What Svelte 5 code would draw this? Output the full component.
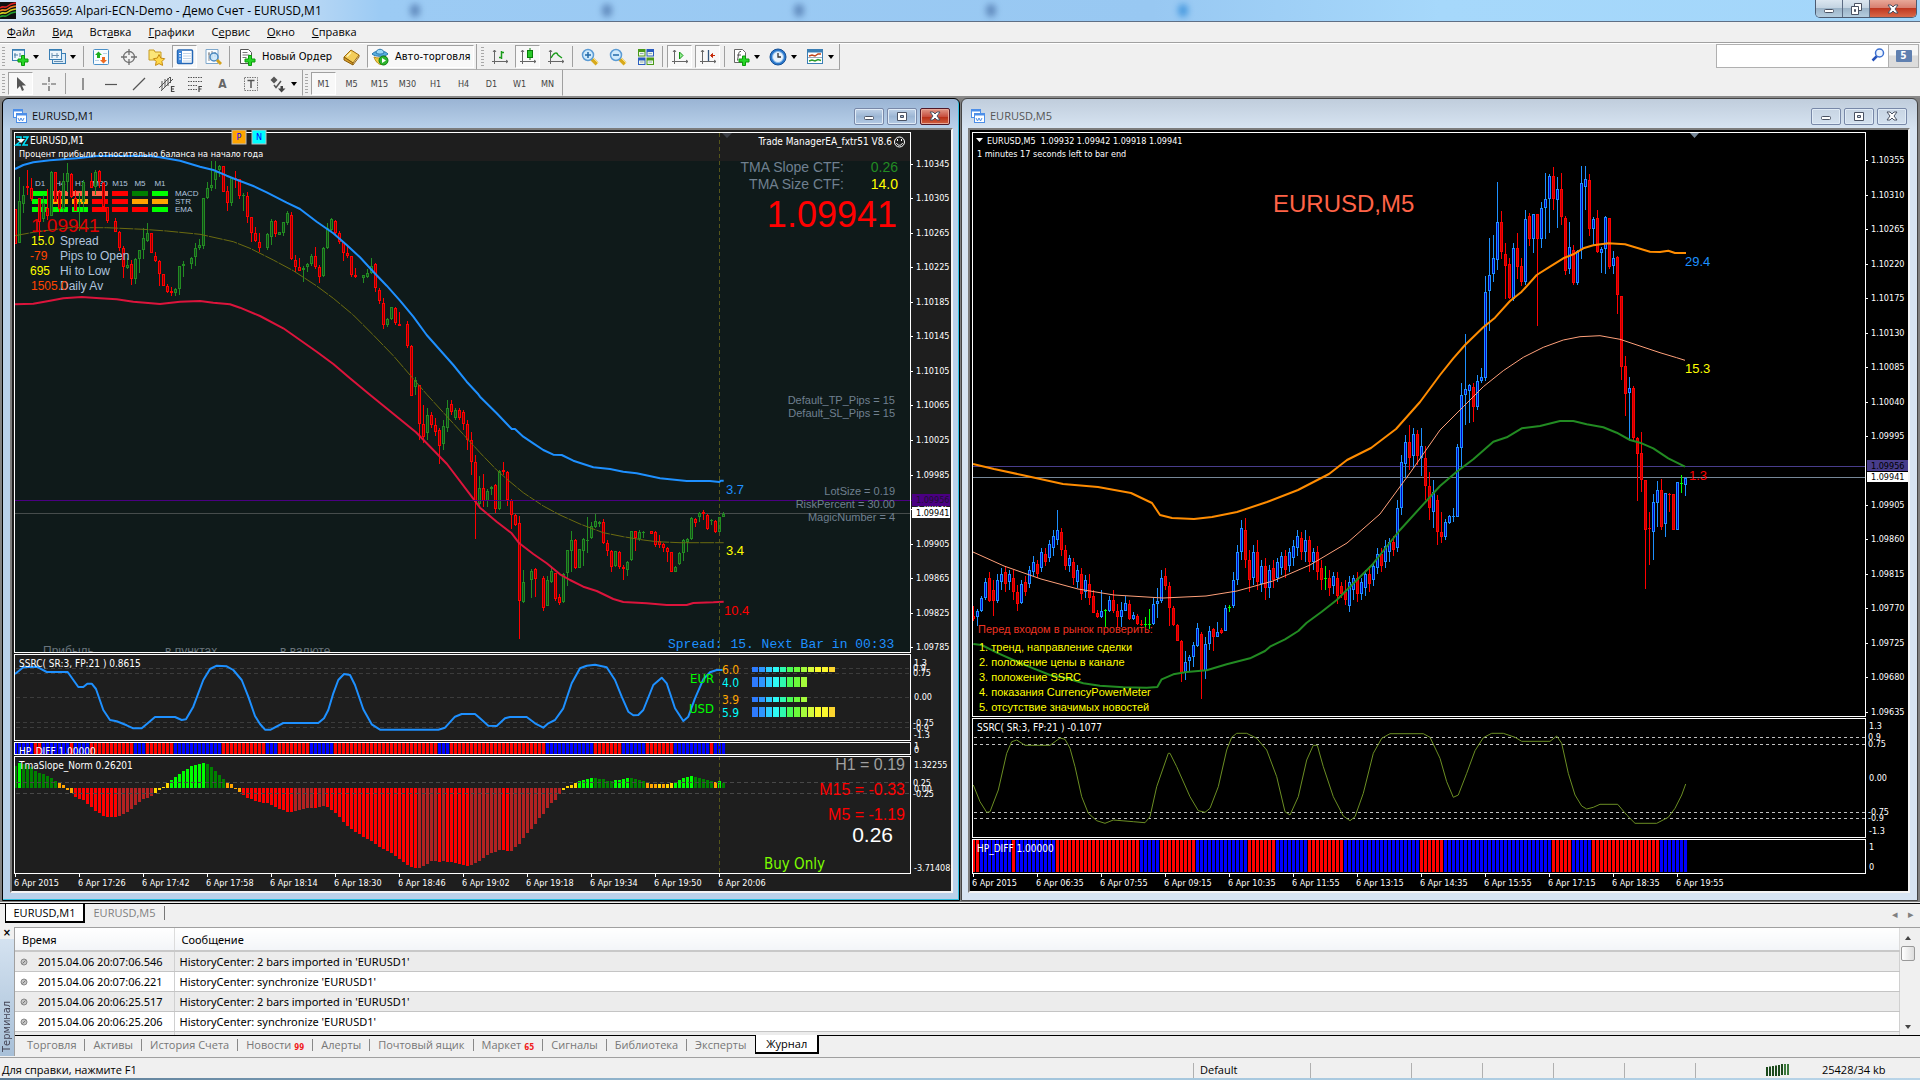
<script>
  // Candle records: colour code, high, low, body top, body bottom.
  const m1Early = 'r252 356 252 356;g157 355 228 355;g183 265 210 238;r135 210 183 190;r160 228 190 222;-;r218 335 220 290;g210 290 235 283;r192 285 248 272;g138 272 142 272;r142 232 142 232;r195 262 200 253;g143 260 168 253;g113 202 145 170;r145 220 148 216;r195 258 218 258;g205 318 230 236;g165 262 170 232;-;r145 190 168 188;g135 210 140 186;r135 190 138 170;r172 262 175 245;r245 295 245 288;-;r280 322 287 322;r318 378 322 370;r362 458 370 425;g400 432 420 430;r405 480 418 463;g400 477 403 462;g375 443 375 403;g310 402 338 374;g293 350 325 348;r325 385 325 385;r380 412 393 408;r405 483 407 448;r448 482 448 482;r478 503 482 500;r485 512 497 503;g488 512 491 503;g423 510 423 493;g408 457 418 423;-;g395 433 398 416;g353 422 368 395;g343 375 360 368;g218 372 218 363;g170 223 190 220;g108 197 180 188;g108 192 140 165;g120 155 122 136;r122 200 122 200;r182 257 197 235;g155 242 158 234;r138 190 158 165;r162 222 162 213;g205 258 211 214;r202 295 212 275;r275 350 275 325;r305 352 325 347;r325 382 350 368;-;g323 376 328 370;g282 360 288 335;r285 335 288 328;g322 330 322 330;g290 333 292 325;g258 300 263 293;r262 405 270 403;r390 440 405 427;r400 437 427 437;g422 470 430 436;g415 440 418 425;g388 424 392 418;r365 433 392 425;r420 473 427 457;g365 455 368 452;g295 372 310 370;g278 318 283 315;r285 330 287 325;r318 357 325 352;r350 408 352 385;r363 400 385 392;r393 457 393 450;r428 460 450 457;-;g450 473 450 458;g433 460 445 455;g400 448 423 445;r413 500 418 490;r490 537 495 527;r520 612 535 600;g578 605 583 600;g545 585 547 583;r545 600 548 595;r562 603 597 602;-;r587 670 598 662;r660 812 663 812'
  const m1Mid = 'g377 395 380 387;r385 440 385 424;r405 443 424 437;g408 440 415 433;r412 428 415 425;r418 436 425 432;r428 464 430 446;g420 450 426 444;g400 432 408 428;r400 415 404 412;g408 420 410 418;r408 420 410 418;r410 430 412 424;r420 450 424 440;r432 475 440 462;r455 539 462 502;g476 508 488 504'
  const m1Late = 'r252 350 295 332;g298 350 302 332;g288 315 290 296;r282 370 286 358;g240 360 243 358;r215 255 240 246;r243 347 245 331;r328 417 331 376;r372 407 376 406;r378 747 400 634;g540 638 577 635;-;g538 625 543 571;r533 620 538 566;-;r558 662 565 653;g558 648 570 647;g528 580 543 575;r548 632 550 628;r612 645 622 638;g550 638 553 637;g480 588 481 550;g423 545 451 482;r448 538 451 535;g478 535 478 535;g443 528 448 483;g380 490 449 451;g395 448 408 445;g372 413 394 412;g392 410 396 402;r388 461 397 458;r450 497 460 484;r480 545 482 532;g482 530 484 527;r482 537 487 531;r525 570 532 538;g512 557 517 541;g422 512 424 511;r422 482 424 444;g420 453 427 447;g422 443 425 428;-;r422 433 424 432;r422 470 425 464;r435 475 452 466;r460 487 463 475;r472 515 475 485;r487 545 487 545;g528 546 530 545;g487 526 490 523;g448 513 451 490;g445 485 448 455;g382 449 385 448;r385 412 388 400;g366 397 370 382;r360 390 366 373;r372 420 374 418;g386 405 390 392;r390 430 392 427;g380 427 382 425;g366 381 371 380'
  const m5Early = 'r606 621 616 619;b609 626 611 617;b596 612 598 611;b578 600 582 598;r572 602 578 601;r580 616 590 601;b574 603 580 601;b568 590 574 582;r566 592 572 584;b570 590 574 582;r570 600 578 592;r585 611 592 604;b580 604 584 603;r576 596 582 592;b566 588 570 584;b556 576 562 572;r560 578 564 574;b548 572 552 568;r548 566 554 562;b540 562 544 558;b530 556 536 548;b510 545 530 540;r528 556 532 550;r545 570 550 566;b555 572 558 566;r558 585 562 578;b565 588 570 582;r568 600 574 594;b575 598 580 592;r574 605 584 598;r590 613 596 613;r610 618 613 617;b590 618 611 617;l609 627 610 611;b596 612 600 611;r590 613 600 611;r604 627 611 617;b602 627 610 617;b596 611 603 611;r600 620 604 619;b612 620 615 619;r614 625 616 624;r620 626 624 625;l617 627 624 625;l609 629 624 625;b598 625 604 624;b588 618 601 604;b570 603 578 601;r568 590 576 586;r582 626 586 608;r606 626 608 625;r624 641 625 641;r640 682 641 673;b651 680 662 672;b655 672 657 661;b642 667 645 657;b623 647 628 646;r632 699 634 671;b637 679 644 671;b626 650 631 644;r628 651 629 637;b622 637 632 637;r628 634 630 633;b605 631 608 631;l605 612 607 608;b572 608 580 606;b545 585 552 580;b520 560 528 552;r518 568 530 560;r550 592 560 580;b545 585 552 578;r540 590 552 582;b560 592 566 584;r558 600 566 588;b565 598 570 588;r560 588 568 580;b558 582 562 578;b552 575 556 568;r550 578 556 570;b548 572 552 566;b540 566 546 558;b530 556 536 548;r532 560 538 552;b530 562 540 552;r536 572 540 562;b548 570 552 562;r546 580 552 572;r560 590 568 580;l566 590 578 579;r570 596 578 588;b572 594 576 586;r572 604 578 596;r582 598 586 594;r580 605 592 600;b576 612 582 606;b575 600 578 590;r572 602 578 594;b578 600 582 594;b570 596 574 588;r566 592 574 584;b562 586 566 580;b548 574 554 568;r548 572 554 566;b540 568 546 562;b538 562 542 552;r536 556 542 550;b500 552 508 548;b455 515 462 508;b435 478 442 464;r425 470 442 458;b428 468 434 456;r430 465 434 456;b428 476 446 458;r446 500 458 486;r472 520 486 508;b480 528 492 512;r495 545 500 532'
  const m5Late = 'r1176 1268 1237 1250;b1197 1260 1206 1250;b1186 1211 1188 1210;b1164 1206 1189 1192;b972 1190 982 1190;b788 1043 826 983;b642 915 808 826;b792 908 796 814;r790 906 802 860;b765 870 783 860;b743 788 772 782;b467 782 517 775;b353 633 466 514;b345 487 415 463;b186 450 307 421;r272 418 307 395;r370 537 403 437;r415 538 433 533;b370 543 385 538;r338 477 385 442;r415 498 439 485;b270 495 298 485;r280 378 289 356;b283 398 283 356;r283 618 283 358;b245 385 265 358;b160 358 238 265;b162 338 169 238;r141 270 169 236;b172 323 208 241;r158 315 208 292;r288 465 295 452;b305 463 382 448;r375 496 391 488;b390 495 393 488;b138 416 190 391;b138 270 178 200;r163 348 181 328;b290 378 298 328;r270 400 295 397;b382 459 388 398;b288 462 292 388;r293 446 295 440;b393 462 415 437;r408 582 412 526;r528 780 529 740;r708 888 739 821;b770 962 805 818;r798 962 805 955;r950 1143 955 1003;r936 1116 1000 1081;r1080 1407 1081 1229;r1176 1335 1225 1228;b1122 1320 1147 1235;b1083 1221 1111 1148;r1077 1230 1111 1220;b1119 1250 1120 1213;r1118 1176 1122 1126;r1123 1229 1123 1229;b1087 1229 1087 1229;l1065 1119 1089 1091;b1070 1128 1073 1094'

  // `unit` is how many record steps make one pixel.
  function candles(src, x0, y0, unit = 3) {
    return src.split(';').map((s, i) => {
      if (s === '-') return null
      const [h, l, t, b] = s.slice(1).split(' ').map((v) => Math.round(y0 + v / unit))
      return { x: x0 + 4 * i, k: s[0], h, l: Math.max(l, h + 1), t, b: Math.max(b, t + 1) }
    }).filter(Boolean)
  }
  const m1 = [...candles(m1Early, 15, 125), ...candles(m1Mid, 415, 0, 1), ...candles(m1Late, 483, 390)]
  const m5 = [...candles(m5Early, 973, 0, 1), ...candles(m5Late, 1441, 120)]
  const innerM1 = { r: '#8c0000', g: '#14481a' }
  const innerM5 = { r: '#c00000', b: '#0000cd', l: '#00ff00' }

  // Points in thirds of a pixel, offset by an origin.
  const line = (src, x0, y0) =>
    src.split(' ').map((p) => {
      const [x, y] = p.split(',').map(Number)
      return `${(x0 + x / 3).toFixed(1)},${(y0 + y / 3).toFixed(1)}`
    }).join(' ')

  const upper1 = line('45,132 70,120 100,112 150,106 230,100 290,93 450,93 480,97 540,107 600,125 640,135 680,152 720,168 760,183 800,202 860,233 900,252 950,290 1000,325 1040,360 1080,397 1120,440 1160,482 1200,527 1240,575 1280,630 1320,675 1360,720 1400,770 1435,808', 0, 125) + ' ' +
    line('0,20 50,70 95,117 105,117 130,140 160,160 190,180 220,194 245,195 280,212 340,232 390,237 430,245 470,250 540,265 620,273 690,273 718,276 722,272 731,272', 480, 390)
  const lower1 = line('45,538 100,536 150,527 190,520 245,516 300,520 350,523 400,530 480,537 540,530 600,528 640,533 690,538 720,548 780,573 850,610 900,645 950,680 1000,717 1050,760 1108,808 1248,922 1341,1017', 0, 125) + ' ' +
    line('0,353 50,395 95,430 118,460 160,492 200,520 240,553 270,570 310,590 350,603 400,627 430,636 500,640 560,645 620,645 640,639 700,637 731,635', 480, 390)
  const mid1 = line('45,332 100,322 150,315 210,308 320,308 430,313 500,318 600,328 700,350 750,370 820,405 880,437 950,483 1000,520 1060,570 1120,630 1180,692 1230,750 1280,808', 0, 125) + ' ' +
    line('0,188 50,240 80,267 130,308 190,348 240,375 300,402 370,428 430,440 490,450 530,455 600,458 731,458', 480, 390)
  const ssrc1 = line('45,132 70,112 110,110 140,126 203,126 235,171 250,171 262,161 275,161 288,177 310,240 330,270 350,274 380,286 400,295 425,295 445,278 465,261 525,261 545,270 558,268 580,230 610,150 630,117 650,107 680,109 700,120 725,150 745,200 765,258 780,282 795,299 812,299 850,279 955,279 972,265 985,240 1000,190 1015,150 1032,132 1050,135 1065,165 1090,238 1115,283 1140,299 1315,299 1335,293 1365,260 1385,252 1425,252', 0, 630) + ' ' +
    line('0,235 25,257 50,258 75,235 90,231 140,231 165,250 190,263 205,250 225,240 250,205 275,130 300,85 320,77 345,74 380,82 405,120 425,170 445,215 460,226 475,225 490,210 520,135 545,113 560,130 585,205 610,243 625,230 645,175 670,118 690,97 710,90 731,90', 480, 640)

  const upper5 = '973,464 994,469 1022,475 1063,484 1098,487 1131,493 1152,503 1160,515 1172,518 1194,519 1212,517 1237,512 1267,502 1298,490 1329,474 1347,460 1371,448 1396,429 1420,402 ' +
    line('0,765 40,715 75,675 130,622 165,593 210,543 245,515 290,465 330,440 370,415 400,403 430,385 460,376 505,370 555,373 590,383 630,395 660,396 685,392 705,399 738,399', 1440, 120)
  const mid5 = '973,552 1004,566 1041,579 1078,589 1114,595 1163,598 1206,596 1237,591 1273,581 1310,565 1347,543 1380,514 1410,473 ' +
    line('0,930 70,860 130,800 190,752 250,712 310,682 370,660 420,650 480,647 540,658 600,678 660,698 710,713 735,721', 1440, 120)
  const lower5 = line('40,132 65,135 110,158 160,180 220,205 270,225 320,235 370,250 420,257 490,262 560,263 592,261 605,238 640,223 680,216 740,211 800,193 870,175 915,153 930,140 975,118 1015,93 1040,68 1085,35 1130,0', 960, 600) + ' 1372,565 1400,530 ' +
    line('0,1098 50,1055 100,1018 160,965 200,952 245,925 300,918 360,903 400,903 440,913 490,922 530,938 570,960 605,970 640,985 685,1015 735,1040', 1440, 120)
  const ssrc5 = line('40,555 60,605 80,637 90,635 115,570 140,460 155,425 170,420 195,436 270,436 300,414 315,418 330,445 345,500 365,590 385,640 410,662 435,670 460,660 520,665 555,668 570,650 590,560 625,460 630,460 650,500 690,590 715,632 735,637 750,625 775,560 800,450 815,412 830,400 860,400 890,415 920,450 950,530 975,635 990,645 1015,590 1040,480 1060,436 1072,436 1090,500 1120,590 1150,648 1170,662 1185,650 1210,580 1240,460 1265,415 1290,401 1390,401 1410,412', 960, 600) + ' ' +
    line('0,835 20,905 40,952 55,945 80,880 105,812 130,773 155,760 190,760 225,772 245,784 330,784 350,768 365,790 385,880 405,945 425,978 440,987 460,982 480,973 533,973 560,1005 585,1030 650,1030 685,1012 705,985 725,945 737,912', 1440, 480)

  // Run lengths of alternating colours.
  const runs = (list, first) =>
    list.flatMap((n, i) => Array(n).fill((i % 2 === 0) === (first === 'b') ? '#0000ff' : '#ff0000'))
  const diff1 = runs([5, 2, 7, 1, 4, 11, 3, 7, 12, 11, 3, 8, 6, 26, 3, 24, 12, 7, 6, 7, 9, 1, 3], 'b')
  const diff5 = runs([2, 8, 1, 10, 21, 5, 9, 13, 7, 8, 9, 19, 6, 27, 5, 5, 17, 7], 'r')

  const slopeColors = { d: '#008000', l: '#00ff00', o: '#ffa500', y: '#ffd700', r: '#ff0000', k: '#b22222' }
  const slope = 'd408 l400 d402 d405 d410 d422 d428 d432 d438 d444 d452 o458 o465 o480 o490 r500 r506 r510 r521 r531 r543 r549 r557 r560 r561 r561 k557 k551 k546 k537 k525 k516 k507 k503 k497 y489 y480 y471 y458 l450 l441 l432 l423 l417 l409 l405 l402 l399 d402 d411 d423 d434 d447 o459 o462 o477 o487 r495 r503 r507 r513 r516 r519 r519 r525 r531 r537 r540 r545 r545 k543 k541 k538 k535 k534 r534 k531 k528 r531 r540 r549 r561 r576 r588 r597 r606 r612 r620 r627 r634 r641 r650 r656 r663 r669 r678 r687 r696 r705 r711 r714 k714 k708 k702 k693 k693 r695 k693 r696 r696 r699 r702 r705 r708 k705 k699 k693 k685 k675 k668 k665 k659 r660 r663 k663 k650 k642 k624 k609 k597 k582 k564 k552 k534 k520 k510 k492 y480 y468 y465 y459 l453 l450 l447 l444 d444 d447 d447 d453 d453 l450 l450 l447 l444 d444 d447 d450 d453 o460 o462 o462 y462 o462 y462 y459 l456 l450 l444 l441 l438 d441 d444 d447 d450 d453 o457 l454 d458'
    .split(' ').map((s, i) => {
      const tip = Math.round((+s.slice(1) - 474) / 3)
      return { x: 14 + 4 * i, y: tip < 0 ? 788 + tip : 788, h: Math.abs(tip), c: slopeColors[s[0]] }
    })

  const prices1 = [['1.10345', 164], ['1.10305', 198], ['1.10265', 233], ['1.10225', 267], ['1.10185', 302], ['1.10145', 336], ['1.10105', 371], ['1.10065', 405], ['1.10025', 440], ['1.09985', 475], ['1.09945', 509], ['1.09905', 544], ['1.09865', 578], ['1.09825', 613], ['1.09785', 647]]
  const prices5 = [['1.10355', 160], ['1.10310', 195], ['1.10265', 229], ['1.10220', 264], ['1.10175', 298], ['1.10130', 333], ['1.10085', 367], ['1.10040', 402], ['1.09995', 436], ['1.09905', 505], ['1.09860', 539], ['1.09815', 574], ['1.09770', 608], ['1.09725', 643], ['1.09680', 677], ['1.09635', 712]]
  const times1 = ['2015', '17:26', '17:42', '17:58', '18:14', '18:30', '18:46', '19:02', '19:18', '19:34', '19:50', '20:06']
  const times5 = ['2015', '06:35', '07:55', '09:15', '10:35', '11:55', '13:15', '14:35', '15:55', '17:15', '18:35', '19:55']

  const frames = ['D1', 'H4', 'H1', 'M30', 'M15', 'M5', 'M1']
  const L = '#00ff00', T = '#ff6347', R = '#ff0000', G = '#008000', O = '#ffa500'
  const signals = [
    { name: 'MACD', cells: [L, T, T, T, R, G, L] },
    { name: 'STR', cells: [L, O, O, R, R, O, O] },
    { name: 'EMA', cells: [L, L, L, R, R, R, L] }
  ]
  const meter = ['#2e7bff', '#2e96ff', '#2ed0ff', '#2efbf5', '#2efbaf', '#49fb55', '#6cfb3b', '#a5fb3b', '#d5fb3b', '#fbfb2e', '#fbf82e', '#fbd52e']
  const meters = [{ y: 667, h: 5, n: 12 }, { y: 677, h: 10, n: 8 }, { y: 697, h: 5, n: 8 }, { y: 707, h: 10, n: 12 }]

  const menu = [['', 'Ф', 'айл'], ['', 'В', 'ид'], ['Вст', 'а', 'вка'], ['', 'Г', 'рафики'], ['С', 'е', 'рвис'], ['', 'О', 'кно'], ['', 'С', 'правка']]
  const periods = ['M1', 'M5', 'M15', 'M30', 'H1', 'H4', 'D1', 'W1', 'MN']
  const log = [
    ['2015.04.06 20:07:06.546', "HistoryCenter: 2 bars imported in 'EURUSD1'"],
    ['2015.04.06 20:07:06.221', "HistoryCenter: synchronize 'EURUSD1'"],
    ['2015.04.06 20:06:25.517', "HistoryCenter: 2 bars imported in 'EURUSD1'"],
    ['2015.04.06 20:06:25.206', "HistoryCenter: synchronize 'EURUSD1'"]
  ]
  const tabs = [['Торговля'], ['Активы'], ['История Счета'], ['Новости', '99'], ['Алерты'], ['Почтовый ящик'], ['Маркет', '65'], ['Сигналы'], ['Библиотека'], ['Эксперты'], ['Журнал']]
</script>

{#snippet icon(name)}
  <svg class="ico" viewBox="0 0 18 18" width="18" height="18" aria-hidden="true">
    {#if name === 'newchart'}
      <rect x="1.5" y="1.5" width="12" height="11" fill="#eef6fc" stroke="#3a7fb5" /><path d="M1 2h13" stroke="#3a7fb5" stroke-width="1.500" /><path d="M4 5v5M3 7h4M9 5v4" stroke="#4b7fa5" />
      <path d="M10.500 7.500h3v3.500h3.500v3h-3.500v3.500h-3v-3.500h-3.500v-3h3.500z" fill="#27d627" stroke="#0a9a0a" />
    {:else if name === 'profiles'}
      <rect x="4.500" y="5.500" width="13" height="10" fill="#dcecf8" stroke="#3a7fb5" /><rect x="1.500" y="1.500" width="12" height="10" fill="#eef6fc" stroke="#3a7fb5" /><path d="M1 2h13" stroke="#3a7fb5" stroke-width="1.500" /><path d="M4 5v5M4 7.500h7M9 5v5M6 13.500h9" stroke="#6a8fae" />
    {:else if name === 'market'}
      <rect x="1.500" y="1.500" width="15" height="15" rx="1" fill="#f8fcff" stroke="#4a90c8" /><path d="M6.500 3.500l3.500 3.500H8v3H5V7H3z" fill="#1fae1f" /><path d="M11.500 15.500L8 12h2V9h3v3h2z" fill="#ee6a20" /><path d="M11 5.500h4M3 12.500h4" stroke="#b8d0e4" />
    {:else if name === 'target'}
      <circle cx="9" cy="9" r="5.500" fill="none" stroke="#707070" stroke-width="1.300" /><path d="M9 1v6M9 11v6M1 9h6M11 9h6" stroke="#707070" stroke-width="1.300" />
    {:else if name === 'folder'}
      <path d="M1 2h5l1 2h6v8H1z" fill="#fbe678" stroke="#c79b22" /><path d="M11 6.500l1.800 3.600 3.900.6-2.800 2.800.7 3.900-3.600-1.800-3.500 1.800.7-3.900-2.800-2.800 3.900-.6z" fill="#ffd94a" stroke="#c58a10" />
    {:else if name === 'navigator'}
      <rect x="1.500" y="2" width="15" height="13.500" rx="1" fill="#fff" stroke="#2567b5" stroke-width="1.500" /><rect x="2" y="3" width="4" height="12" fill="#3f86d8" /><path d="M7 5.500h8M7 8h8M7 10.500h8M7 13h8" stroke="#c3d5e8" /><path d="M3 5.500h2M3 8h2M3 11h2" stroke="#fff" />
    {:else if name === 'tester'}
      <path d="M2 1.500h12v14H2z" fill="#fbfdff" stroke="#7fa8cc" /><path d="M5 4v9M11 4v5M4 6h2M8 3v8" stroke="#888" /><circle cx="10" cy="9" r="4" fill="#cbe7fb" fill-opacity=".85" stroke="#4d8ac0" stroke-width="1.500" /><path d="M13 12l4 4" stroke="#d3a11c" stroke-width="3" />
    {:else if name === 'order'}
      <path d="M2.500 1.500h8l3 3v11h-11z" fill="#fff" stroke="#555" /><path d="M4.500 4.500h5M4.500 7h7M4.500 9.500h4" stroke="#777" /><path d="M10.500 7.500h3v3.500h3.500v3h-3.500v3.500h-3v-3.500H7v-3h3.500z" fill="#27d627" stroke="#0a9a0a" />
    {:else if name === 'book'}
      <path d="M1 9l7-7 8 5-6 8z" fill="#f3cd5a" stroke="#9d6a0c" /><path d="M1 9v3l9 5v-2z" fill="#d9a02a" stroke="#8a5b08" /><path d="M10 17l6-8V7" fill="none" stroke="#9d6a0c" /><path d="M4 8.500l4-4" stroke="#fff3b8" stroke-width="1.500" />
    {:else if name === 'expert'}
      <path d="M1 6c3-4 13-4 16 0-3 3-13 3-16 0z" fill="#56aee0" stroke="#2a77ac" /><path d="M5 5c0-5 8-5 8 0-2 1.500-6 1.500-8 0z" fill="#9bd8f6" stroke="#2a77ac" /><path d="M3 9c3 1.500 9 1.500 12-.5l-5 8c-3 0-6-4-7-7.500z" fill="#f1cd48" stroke="#b98b15" /><circle cx="12.500" cy="12.500" r="4.500" fill="#2eb52e" stroke="#0d7d0d" /><path d="M11 10l4 2.500-4 2.500z" fill="#fff" />
    {:else if name === 'bars'}
      <path d="M3.500 2v14M1 13.500h16M2 4l1.500-2L5 4M15 12l2 1.500-2 1.500" fill="none" stroke="#666" /><path d="M10.500 3v8M8 9.500h2.500M10.500 4.500H13" stroke="#1a9b1a" stroke-width="1.500" />
    {:else if name === 'candlesticks'}
      <path d="M3.500 2v14M1 13.500h16M2 4l1.500-2L5 4M15 12l2 1.500-2 1.500" fill="none" stroke="#666" /><path d="M11 0v12" stroke="#087d08" /><rect x="8.500" y="2.500" width="5" height="7" fill="#28c828" stroke="#087d08" />
    {:else if name === 'linechart'}
      <path d="M3.500 2v14M1 13.500h16M2 4l1.500-2L5 4M15 12l2 1.500-2 1.500" fill="none" stroke="#666" /><path d="M4 10c3-6 6-6 7-3l4 3" fill="none" stroke="#1a9b1a" stroke-width="1.300" />
    {:else if name === 'zoomin' || name === 'zoomout'}
      <path d="M11 11l5 5" stroke="#d8a91c" stroke-width="4" /><path d="M12 10l5 5" stroke="#fbe27a" /><circle cx="7" cy="7" r="5.500" fill="#cfeafc" stroke="#5b9bd4" stroke-width="1.500" /><path d="M4 7h6" stroke="#2268a8" stroke-width="1.500" />
      {#if name === 'zoomin'}<path d="M7 4v6" stroke="#2268a8" stroke-width="1.500" />{/if}
    {:else if name === 'tile'}
      <rect x="1" y="1" width="7.500" height="7.500" fill="#4a9a1a" /><rect x="9.500" y="1" width="7.500" height="7.500" fill="#2a5cc0" /><rect x="1" y="9.500" width="7.500" height="7.500" fill="#2a5cc0" /><rect x="9.500" y="9.500" width="7.500" height="7.500" fill="#4a9a1a" /><path d="M2 4h5.500v3.500H2zM10.500 4H16v3.500h-5.500zM2 12.500h5.500V16H2zM10.500 12.500H16V16h-5.500z" fill="#eef8e8" /><path d="M3 5.500h3.500M11.500 5.500H15M3 14h3.500M11.500 14H15" stroke="#9ab" />
    {:else if name === 'scroll'}
      <path d="M3.500 2v14M1 13.500h16M2 4l1.500-2L5 4M15 12l2 1.500-2 1.500" fill="none" stroke="#666" /><path d="M8.500 4l3.500 3.500L8.500 11z" fill="#8ff08f" stroke="#159015" />
    {:else if name === 'shift'}
      <path d="M3.500 2v14M1 13.500h16M2 4l1.500-2L5 4M15 12l2 1.500-2 1.500" fill="none" stroke="#666" /><path d="M9.500 2v11" stroke="#33557a" stroke-width="1.300" /><path d="M16 7.500h-4M13.500 5.500l-2 2 2 2z" stroke="#c52b0b" fill="#c52b0b" />
    {:else if name === 'indicators'}
      <path d="M2.500 1.500h8l3 3v10h-11z" fill="#fff" stroke="#666" /><path d="M9 3.500c-2-.5-2 1-2.500 3l-1 6M5 7h4" fill="none" stroke="#555" /><path d="M10.500 8h3v3h3.500v3h-3.500v3.500h-3v-3.500H7v-3h3.500z" fill="#27d627" stroke="#0a9a0a" />
    {:else if name === 'clock'}
      <circle cx="9" cy="9" r="8" fill="#2a78cc" stroke="#154f95" /><circle cx="9" cy="9" r="5.500" fill="#e9f3fc" stroke="#8bbbe8" /><path d="M9 5v4h3" fill="none" stroke="#333" stroke-width="1.300" />
    {:else if name === 'template'}
      <rect x="1.500" y="1.500" width="15" height="14" fill="#fff" stroke="#3a7fb5" /><path d="M1 3h16" stroke="#3a7fb5" stroke-width="3" /><path d="M3 8l3-1 3 1 3-2h3" fill="none" stroke="#c0441a" stroke-width="1.500" /><path d="M2 9.500h14" stroke="#9ab" /><path d="M3 13l3-1 3 1 3-1.500 3 1" fill="none" stroke="#2b9c2b" stroke-width="1.500" />
    {:else if name === 'pointer'}
      <path d="M5 2v12l3-3 2 5 2-1-2-4.500h4z" fill="#555" />
    {:else if name === 'cross'}
      <path d="M9 2v5M9 11v5M2 9h5M11 9h5" stroke="#555" stroke-width="1.200" /><path d="M9 8.500v1" stroke="#555" />
    {:else if name === 'vline'}
      <path d="M9 3v12" stroke="#555" stroke-width="1.200" />
    {:else if name === 'hline'}
      <path d="M3 9.500h12" stroke="#555" stroke-width="1.200" />
    {:else if name === 'trend'}
      <path d="M3 15L15 3" stroke="#555" stroke-width="1.200" />
    {:else if name === 'channel'}
      <path d="M1 13L12 2M3 16L15 4M4 6v9M7 4v8M10 3v8M12.500 2v6" stroke="#555" /><path d="M16.500 11.500h-3v5h3M13.500 14h2.500" fill="none" stroke="#444" stroke-width="1.200" />
    {:else if name === 'fibo'}
      <path d="M2 2.500h14M2 6.500h14M2 10.500h9M2 14.500h9" stroke="#555" stroke-dasharray="1.500 1" /><path d="M16 11.500h-3V17M13 14h2.500" fill="none" stroke="#444" stroke-width="1.200" />
    {:else if name === 'label'}
      <rect x="2.500" y="2.500" width="13" height="13" fill="none" stroke="#777" stroke-dasharray="1.500 1" /><path d="M5.500 5.500h7M9 5v8" stroke="#555" stroke-width="1.500" />
    {:else if name === 'arrows'}
      <path d="M5 1.500l3.500 3.500L5 8.500 1.500 5z" fill="#555" /><path d="M14 11v2.500h2.500L12.500 17.500l-3.500-4h2.500V11z" fill="#444" /><path d="M5 10l2 2.500L12 6" fill="none" stroke="#555" stroke-width="1.500" />
    {/if}
  </svg>
{/snippet}

{#snippet tool(name, label, pressed, drop)}
  <button class="tool" class:pressed class:drop aria-label={label}>{@render icon(name)}{#if drop}<span class="caret"></span>{/if}</button>
{/snippet}

{#snippet winIcon()}
  <svg class="wico" viewBox="0 0 14 14" width="14" height="14" aria-hidden="true"><rect x=".5" y=".5" width="9" height="8" fill="#fff" stroke="#4c8ee8" /><path d="M0 1.500h10" stroke="#4c8ee8" stroke-width="2" /><rect x="3.500" y="4.500" width="10" height="9" fill="#fff" stroke="#4c8ee8" /><path d="M3 5.500h11" stroke="#4c8ee8" stroke-width="2" /><path d="M5 9l1.500 3L8 9l1.500 3L11 9" fill="none" stroke="#4c8ee8" /></svg>
{/snippet}

{#snippet glyph(kind)}
  <svg viewBox="0 0 12 12" width="12" height="12" aria-hidden="true">
    {#if kind === 'min'}<rect x="1.500" y="6.500" width="9" height="3" rx="1" fill="#fff" stroke="#4a5263" />
    {:else if kind === 'max'}<path d="M1.500 2.500h9v8h-9zM4.500 5.500v2h3v-2z" fill="#fff" fill-rule="evenodd" stroke="#4a5263" />
    {:else if kind === 'restore'}<path d="M4.500.5h7v7h-7z" fill="#fff" stroke="#4a5263" /><path d="M1.500 3.500h7v8h-7zM4.500 6.500v2h1v-2z" fill="#fff" fill-rule="evenodd" stroke="#4a5263" />
    {:else}<path d="M1 2h3l2 2 2-2h3L8 6l3 4H8L6 8l-2 2H1l3-4z" fill="#fff" stroke="#4a5263" />{/if}
  </svg>
{/snippet}

{#snippet childTitle(name)}
  <header class="childbar">
    {@render winIcon()}<span>{name}</span>
    <div class="controls">
      <button aria-label="Свернуть">{@render glyph('min')}</button>
      <button aria-label="Развернуть">{@render glyph('max')}</button>
      <button class="close" aria-label="Закрыть">{@render glyph('close')}</button>
    </div>
  </header>
{/snippet}

{#snippet candle(c, inner)}
  <rect x={c.x} y={c.h} width="1" height={c.l - c.h} class={c.k} />
  <rect x={c.x - 1} y={c.t} width="3" height={c.b - c.t} class={c.k} />
  {#if c.b - c.t > 2}<rect x={c.x} y={c.t + 1} width="1" height={c.b - c.t - 2} fill={inner[c.k]} />{/if}
{/snippet}

<div class="app">
  <header class="titlebar">
    <svg class="logo" viewBox="0 0 16 17" width="16" height="17" aria-hidden="true"><rect width="16" height="17" fill="#101010" /><path d="M0 6c4-3 4 1 8-2s4-2 8-3" fill="none" stroke="#e02020" stroke-width="1.500" /><path d="M0 9c4-3 4 1 8-2s4-2 8-3" fill="none" stroke="#f08020" stroke-width="1.500" /><path d="M0 12c4-3 4 1 8-2s4-2 8-3" fill="none" stroke="#d8d020" stroke-width="1.500" /><path d="M0 15c4-3 4 1 8-2s4-2 8-3" fill="none" stroke="#20a030" stroke-width="1.500" /></svg>
    <h1>9635659: Alpari-ECN-Demo - Демо Счет - EURUSD,M1</h1>
    <div class="glow" aria-hidden="true"><i></i><i></i><i></i><i></i><i></i></div>
    <div class="syscontrols">
      <button aria-label="Свернуть окно">{@render glyph('min')}</button>
      <button aria-label="Восстановить окно">{@render glyph('restore')}</button>
      <button class="close" aria-label="Закрыть окно">{@render glyph('close')}</button>
    </div>
  </header>

  <nav class="menu">
    {#each menu as m}<button>{m[0]}<u>{m[1]}</u>{m[2]}</button>{/each}
  </nav>

  <div class="toolbars">
    <div class="bars">
      <div class="row">
        <div class="bar">
          <span class="grip"></span>
          {@render tool('newchart', 'Новый график', false, true)}
          {@render tool('profiles', 'Профили', false, true)}
          <span class="sep"></span>
          {@render tool('market', 'Обзор рынка')}
          {@render tool('target', 'Окно данных')}
          {@render tool('folder', 'Избранное')}
          {@render tool('navigator', 'Терминал', true)}
          {@render tool('tester', 'Тестер стратегий')}
          <span class="sep"></span>
          <button class="tool wide">{@render icon('order')}Новый Ордер</button>
          {@render tool('book', 'Редактор')}
          <button class="tool wide pressed">{@render icon('expert')}Авто-торговля</button>
        </div>
        <div class="bar charts">
          <span class="grip"></span>
          {@render tool('bars', 'Бары')}
          {@render tool('candlesticks', 'Свечи', true)}
          {@render tool('linechart', 'Линия')}
          <span class="sep"></span>
          {@render tool('zoomin', 'Увеличить')}
          {@render tool('zoomout', 'Уменьшить')}
          {@render tool('tile', 'Расположить окна')}
          <span class="sep"></span>
          {@render tool('scroll', 'Автопрокрутка', true)}
          {@render tool('shift', 'Сдвиг графика', true)}
          <span class="sep"></span>
          {@render tool('indicators', 'Индикаторы', false, true)}
          {@render tool('clock', 'Периоды', false, true)}
          {@render tool('template', 'Шаблоны', false, true)}
        </div>
      </div>
      <div class="row">
        <div class="bar">
          <span class="grip"></span>
          {@render tool('pointer', 'Курсор', true)}
          {@render tool('cross', 'Перекрестие')}
          <span class="sep"></span>
          {@render tool('vline', 'Вертикальная линия')}
          {@render tool('hline', 'Горизонтальная линия')}
          {@render tool('trend', 'Трендовая линия')}
          {@render tool('channel', 'Канал')}
          {@render tool('fibo', 'Фибоначчи')}
          <button class="tool letter">A</button>
          {@render tool('label', 'Текстовая метка')}
          {@render tool('arrows', 'Стрелки', false, true)}
        </div>
        <div class="bar">
          <span class="grip"></span>
          {#each periods as p, i}<button class="tool period" class:pressed={i === 0}>{p}</button>{/each}
        </div>
      </div>
    </div>
    <div class="search">
      <input type="text" aria-label="Поиск" />
      <svg class="lens" viewBox="0 0 14 14" width="14" height="14" aria-hidden="true"><path d="M6 8l-4.500 4.500" stroke="#2450b8" stroke-width="2.500" /><circle cx="8.500" cy="5" r="4" fill="#eef5ff" stroke="#3c70d0" stroke-width="1.500" /></svg>
      <button class="chat" aria-label="Сообщения"><b>5</b></button>
    </div>
  </div>

  <main class="mdi">
    <section class="child active">
      {@render childTitle('EURUSD,M1')}
      <div class="client">
        <svg class="chart" viewBox="12 130 939 761">
          <defs><clipPath id="p1"><rect x="15" y="133" width="895" height="519" /></clipPath><clipPath id="p3"><rect x="15" y="743" width="895" height="11" /></clipPath></defs>
          <rect x="12" y="130" width="939" height="761" fill="#1e1e1e" />
          <rect x="15" y="161" width="895" height="491" fill="#0f1a1a" />
          <g shape-rendering="crispEdges">
            <path d="M15 513.500H910" stroke="#464c4c" />
            <g fill="none" stroke="#3c3c3c" stroke-dasharray="4 3"><path d="M16 668.500H910M16 673.500H910M16 697.500H910M16 722.500H910M16 727.500H910" /></g>
            {#each m1 as c}{@render candle(c, innerM1)}{/each}
            {#each diff1 as c, i}<rect x={i ? 14 + 4 * i : 15} y="743" width={i ? 3 : 2} height="11" fill={c} />{/each}
            {#each slope as s}<rect x={s.x} y={s.y} width="3" height={s.h} fill={s.c} />{/each}
            <path d="M16 782.500H910M16 793.500H910" stroke="#484848" stroke-dasharray="4 3" />
          </g>
          <g fill="none" stroke-linejoin="round">
            <polyline points={mid1} stroke="#6b6b10" stroke-dasharray="14 1" />
            <polyline points={upper1} stroke="#1e90ff" stroke-width="2" />
            <polyline points={lower1} stroke="#dc143c" stroke-width="2" />
            <polyline points={ssrc1} stroke="#1e90ff" stroke-width="2" />
          </g>
          <g shape-rendering="crispEdges">
            <path d="M15 500.500H950" stroke="#4b0082" />
            <path d="M719.500 133V873" stroke="#55551a" stroke-dasharray="4 3" />
            <path d="M14.500 132.500H910.500V652.500H14.500zM14.500 654.500H910.500V740.500H14.500zM14.500 742.500H910.500V754.500H14.500zM14.500 756.500H910.500V873.500H14.500z" fill="none" stroke="#fff" />
            {#each prices1 as p}<path d="M911 {p[1] + 0.5}h2" stroke="#fff" />{/each}
            {#each times1 as t, i}<path d="M{15.5 + 64 * i} 874v3" stroke="#fff" />{/each}
          </g>
          <path d="M722 133h10l-5 5z" fill="#3d4048" />

          <g class="axis">
            {#each prices1 as p}<text x="916" y={p[1] + 3}>{p[0]}</text>{/each}
            <text x="914" y="666">1.3</text><text x="913" y="671">0.9</text><text x="913" y="676">0.75</text><text x="914" y="700">0.00</text><text x="913" y="726">-0.75</text><text x="913" y="731">-0.9</text><text x="914" y="738">-1.3</text>
            <text x="914" y="749">1</text><text x="914" y="753">0</text>
            <text x="914" y="768">1.32255</text><text x="913" y="786">0.25</text><text x="914" y="792">0.00</text><text x="913" y="797">-0.25</text><text x="914" y="871">-3.71408</text>
            {#each times1 as t, i}<text x={14 + 64 * i} y="886">6 Apr {t}</text>{/each}
          </g>
          <rect x="912" y="494" width="38" height="12" fill="#4b0082" /><text class="ax" x="916" y="503" fill="#1c1030">1.09956</text>
          <rect x="912" y="507" width="38" height="11" fill="#fff" /><text class="ax" x="916" y="516" fill="#000">1.09941</text>

          <g class="cap">
            <text x="30" y="144">EURUSD,M1</text>
            <text class="note" x="19" y="157">Процент прибыли относительно баланса на начало года</text>
            <text x="892" y="145" text-anchor="end">Trade ManagerEA_fxtr51 V8.6</text>
            <text x="19" y="667">SSRC( SR:3, FP:21 ) 0.8615</text>
            <text x="19" y="755" clip-path="url(#p3)">HP_DIFF 1.00000</text>
            <text x="19" y="769">TmaSlope_Norm 0.26201</text>
          </g>
          <g fill="none" stroke="#fff"><circle cx="899.500" cy="142" r="5" /><path d="M896.500 143c1 3 5 3 6 0M897.500 139v2M901.500 139v2" /></g>
          <path d="M16 137h5v4l-5 4h5M23 137h5l-5 8h5" fill="none" stroke="#00e5ff" stroke-width="1.500" /><path d="M17 139h8l-4 4z" fill="#fff" />
          <rect x="232" y="130" width="14" height="14" fill="#ffa500" stroke="#bbb" /><text class="sym" x="239" y="140">P</text>
          <rect x="252" y="130" width="14" height="14" fill="#00ffff" stroke="#bbb" /><text class="sym" x="259" y="140">N</text>

          {#each frames as f, i}<text class="tiny" x={40 + 20 * i} y="186" text-anchor="middle">{f}</text>{/each}
          {#each signals as s, r}
            {#each s.cells as c, i}<rect x={32 + 20 * i} y={191 + 8 * r} width="16" height="5" fill={c} />{/each}
            <text class="tiny" x="175" y={196 + 8 * r}>{s.name}</text>
          {/each}
          <g shape-rendering="crispEdges">{#each m1.slice(4, 22) as c}{@render candle(c, innerM1)}{/each}</g>
          <g class="arial">
            <text x="31" y="232" font-size="19" fill="#e00000">1.09941</text>
            <g font-size="12" fill="#b0c4de">
              <text x="60" y="245">Spread</text><text x="60" y="260">Pips to Open</text><text x="60" y="275">Hi to Low</text><text x="60" y="290">Daily Av</text>
            </g>
            <g font-size="12"><text x="31" y="245" fill="#ffff00">15.0</text><text x="30" y="260" fill="#ff4500">-79</text><text x="30" y="275" fill="#ffff00">695</text><text x="31" y="290" fill="#ff4500">1505.0</text></g>
            <g font-size="14"><text x="844" y="172" text-anchor="end" fill="#708090">TMA Slope CTF:</text><text x="844" y="189" text-anchor="end" fill="#708090">TMA Size CTF:</text><text x="898" y="172" text-anchor="end" fill="#228b22">0.26</text><text x="898" y="189" text-anchor="end" fill="#ffff00">14.0</text></g>
            <text x="897" y="227" text-anchor="end" font-size="36" fill="#ff0000">1.09941</text>
            <g font-size="11" fill="#708090" text-anchor="end"><text x="895" y="404">Default_TP_Pips = 15</text><text x="895" y="417">Default_SL_Pips = 15</text><text x="895" y="495">LotSize = 0.19</text><text x="895" y="508">RiskPercent = 30.00</text><text x="895" y="521">MagicNumber = 4</text></g>
            <g font-size="13"><text x="726" y="494" fill="#1e90ff">3.7</text><text x="726" y="555" fill="#ffff00">3.4</text><text x="724" y="615" fill="#ff0000">10.4</text></g>
            <g font-size="12" fill="#69747c" clip-path="url(#p1)"><text x="43" y="655">Прибыль</text><text x="165" y="655">в пунктах</text><text x="280" y="655">в валюте</text></g>
            <g font-size="16" text-anchor="end"><text x="905" y="770" fill="#a0a0a0">H1 = 0.19</text><text x="905" y="795" fill="#ff0000">M15 = -0.33</text><text x="905" y="820" fill="#ff0000">M5 = -1.19</text></g>
            <text x="893" y="842" font-size="21" text-anchor="end" fill="#fff">0.26</text>
          </g>
          <text class="mono" x="668" y="648">Spread: 15. Next Bar in 00:33</text>
          <g class="verd">
            <text x="764" y="869" font-size="15" fill="#7cfc00">Buy Only</text>
            <g font-size="13" fill="#00ff00"><text x="690" y="683">EUR</text><text x="689" y="713">USD</text></g>
            <g font-size="12"><text x="722" y="674" fill="#ffa500">6.0</text><text x="722" y="687" fill="#00ffff">4.0</text><text x="722" y="704" fill="#ffa500">3.9</text><text x="722" y="717" fill="#00ffff">5.9</text></g>
          </g>
          {#each meters as m}{#each meter.slice(0, m.n) as c, i}<rect x={752 + 7 * i} y={m.y} width="6" height={m.h} fill={c} />{/each}{/each}
        </svg>
      </div>
    </section>

    <section class="child">
      {@render childTitle('EURUSD,M5')}
      <div class="client">
        <svg class="chart" viewBox="970 130 938 761">
          <rect x="970" y="130" width="938" height="761" fill="#000" />
          <g shape-rendering="crispEdges">
            <path d="M973 466.500H1866" stroke="#483d8b" /><path d="M973 477.500H1866" stroke="#778899" />
            <path d="M974 737.500H1865M974 744.500H1865M974 812.500H1865M974 818.500H1865" stroke="#c0c0c0" stroke-dasharray="3 3" />
            {#each m5 as c}{@render candle(c, innerM5)}{/each}
            {#each diff5 as c, i}<rect x={i ? 972 + 4 * i : 973} y="840" width={i ? 3 : 2} height="32" fill={c} />{/each}
          </g>
          <g fill="none" stroke-linejoin="round">
            <polyline points={mid5} stroke="#ffa07a" />
            <polyline points={upper5} stroke="#ff8c00" stroke-width="2" />
            <polyline points={lower5} stroke="#228b22" stroke-width="2" />
            <polyline points={ssrc5} stroke="#6b8e23" />
          </g>
          <g shape-rendering="crispEdges">
            <path d="M972.500 132.500H1865.500V716.500H972.500zM972.500 718.500H1865.500V837.500H972.500zM972.500 839.500H1865.500V873.500H972.500z" fill="none" stroke="#fff" />
            {#each prices5 as p}<path d="M1866 {p[1] + 0.5}h2" stroke="#fff" />{/each}
            {#each times5 as t, i}<path d="M{973.5 + 64 * i} 874v3" stroke="#fff" />{/each}
          </g>
          <path d="M1690 133h9l-4.500 5z" fill="#778899" />
          <path d="M976 138h7l-3.500 4z" fill="#fff" />
          <g class="axis">
            {#each prices5 as p}<text x="1871" y={p[1] + 3}>{p[0]}</text>{/each}
            <text x="1869" y="729">1.3</text><text x="1868" y="740">0.9</text><text x="1868" y="747">0.75</text><text x="1869" y="781">0.00</text><text x="1868" y="815">-0.75</text><text x="1868" y="821">-0.9</text><text x="1869" y="834">-1.3</text><text x="1869" y="850">1</text><text x="1869" y="870">0</text>
            {#each times5 as t, i}<text x={972 + 64 * i} y="886">6 Apr {t}</text>{/each}
          </g>
          <rect x="1867" y="460" width="41" height="11" fill="#483d8b" /><text class="ax" x="1871" y="469" fill="#000">1.09956</text>
          <rect x="1867" y="472" width="41" height="10" fill="#fff" /><text class="ax" x="1871" y="480" fill="#000">1.09941</text>
          <g class="cap">
            <text class="note" x="987" y="144" xml:space="preserve">EURUSD,M5  1.09932 1.09942 1.09918 1.09941</text>
            <text class="note" x="977" y="157">1 minutes 17 seconds left to bar end</text>
            <text x="977" y="731">SSRC( SR:3, FP:21 ) -0.1077</text>
            <text x="977" y="852">HP_DIFF 1.00000</text>
          </g>
          <g class="arial">
            <text x="1273" y="212" font-size="24" fill="#ff6347">EURUSD,M5</text>
            <g font-size="13"><text x="1685" y="266" fill="#1e90ff">29.4</text><text x="1685" y="373" fill="#ffff00">15.3</text><text x="1689" y="480" fill="#ff0000">1.3</text></g>
            <g font-size="11" fill="#ffff00"><text x="978" y="633" fill="#ee3322">Перед входом в рынок проверить:</text><text x="979" y="651">1. тренд, направление сделки</text><text x="979" y="666">2. положение цены в канале</text><text x="979" y="681">3. положение SSRC</text><text x="979" y="696">4. показания CurrencyPowerMeter</text><text x="979" y="711">5. отсутствие значимых новостей</text></g>
          </g>
        </svg>
      </div>
    </section>
  </main>

  <nav class="doctabs">
    <button class="on">EURUSD,M1</button><button>EURUSD,M5</button>
    <span class="scrollers"><button aria-label="Назад">◂</button><button aria-label="Вперед">▸</button></span>
  </nav>

  <section class="terminal">
    <aside><button aria-label="Закрыть терминал">×</button><span>Терминал</span></aside>
    <div class="tbody">
      <div class="tarea">
        <table>
          <thead><tr><th class="c1">Время</th><th>Сообщение</th></tr></thead>
          <tbody>
            {#each log as r}<tr><td><svg viewBox="0 0 8 8" width="8" height="8" aria-hidden="true"><circle cx="4" cy="4" r="3" fill="#c4c4c4" stroke="#888" /><path d="M2.500 5.500l3-3" stroke="#777" /></svg>{r[0]}</td><td>{r[1]}</td></tr>{/each}
            <tr class="peek"><td></td><td></td></tr>
          </tbody>
        </table>
        <div class="vscroll" aria-hidden="true"><i class="up"></i><b></b><i class="down"></i></div>
      </div>
      <nav class="ttabs">
        {#each tabs as t, i}<button class:on={i === tabs.length - 1}>{t[0]}{#if t[1]}<sub>{t[1]}</sub>{/if}</button>{/each}
      </nav>
    </div>
  </section>

  <footer class="status">
    <span class="help">Для справки, нажмите F1</span>
    <span class="cell profile">Default</span>
    <span class="cell a"></span><span class="cell"></span><span class="cell"></span><span class="cell"></span><span class="cell"></span><span class="cell"></span>
    <span class="cell net"><svg viewBox="0 0 24 13" width="24" height="13" aria-hidden="true">{#each Array(8) as _, i}<rect x={3 * i} y={i < 5 ? 4 - i / 2 : 1} width="2" height="11" fill={i < 6 ? '#1c4a1c' : '#3c7a3c'} />{/each}</svg></span>
    <span class="cell traffic">25428/34 kb</span>
  </footer>
  <div class="taskbar" aria-hidden="true"></div>
</div>

<style>
  :global(body) { margin: 0; background: #f0f0f0; }
  .app { min-height: 100vh; display: flex; flex-direction: column; background: #f0f0f0; color: #000; font: 11px/14px 'DejaVu Sans Condensed', 'Noto Sans', sans-serif; overflow: hidden; }
  button { font: inherit; color: inherit; background: none; border: 0; padding: 0; margin: 0; }
  svg { display: block; flex: none; }

  .titlebar { display: flex; align-items: flex-start; height: 21px; border-bottom: 1px solid #5f6f85; background: linear-gradient(90deg, #cfe2f5 0, #c3dcf4 280px, #9ccbf4 380px, #98c8f2 60%, #a6d8fb 75%, #a3d6fa); }
  .logo { margin-top: 2px; }
  h1 { margin: 0 0 0 5px; font: 12px/21px 'Open Sans', sans-serif; white-space: nowrap; }
  .glow { flex: 1; display: flex; justify-content: flex-start; gap: 182px; padding: 4px 0 0 88px; overflow: hidden; height: 17px; }
  .glow i { width: 10px; height: 13px; flex: none; border-radius: 5px; background: #4a72a8; opacity: .7; filter: blur(3px); }
  .glow i:last-child { background: #2a88d8; }
  .syscontrols { display: flex; margin-right: 3px; border: 1px solid #4c5a70; border-top: 0; border-radius: 0 0 5px 5px; overflow: hidden; }
  .syscontrols button { display: grid; place-items: center; width: 27px; height: 17px; border-right: 1px solid #5c6c84; background: linear-gradient(#dbe6f0, #c4d4e2 45%, #9cb4c8 50%, #b4ccde); }
  .syscontrols .close { width: 46px; border: 0; background: linear-gradient(#e8a898, #d88070 45%, #c03820 50%, #d86848); }

  .menu { display: flex; align-items: center; gap: 17px; height: 20px; padding-left: 7px; border-bottom: 1px solid #a0a0a0; box-shadow: 0 1px #fff; margin-bottom: 1px; font: 11px/20px 'Open Sans', sans-serif; }

  .toolbars { display: flex; justify-content: space-between; border-bottom: 2px solid #8a8a8a; }
  .row { display: flex; }
  .bar { display: flex; align-items: center; gap: 3px; height: 25px; padding: 0 2px; border-right: 1px solid #a0a0a0; border-bottom: 1px solid #b0b0b0; }
  .bar.charts { padding-left: 4px; }
  .row + .row .bar { height: 23px; padding-top: 2px; border-bottom-color: #f0f0f0; }
  .grip { width: 3px; height: 20px; background: repeating-linear-gradient(#a8a8a8 0 1px, #f0f0f0 1px 3px); }
  .sep { width: 1px; height: 21px; margin: 0 1px; background: #a0a0a0; }
  .tool { display: flex; align-items: center; justify-content: center; box-sizing: border-box; width: 25px; height: 23px; border: 1px solid transparent; }
  .tool.drop { width: 34px; justify-content: space-between; padding: 0 2px; }
  .tool.pressed { background: #f8f8f8; border-color: #a0a0a0 #fff #fff #a0a0a0; }
  .tool.wide { width: auto; gap: 6px; padding: 0 3px; white-space: nowrap; }
  .tool.letter { font-weight: bold; font-size: 12px; color: #666; }
  .period { font-size: 9px; color: #444; }
  .caret { border: 3px solid transparent; border-top: 4px solid #000; border-bottom: 0; }
  .search { display: flex; width: 203px; height: 24px; margin: 0 1px 0 0; position: relative; }
  .search input { flex: 1; min-width: 0; box-sizing: border-box; border: 1px solid #b0b0b0; background: #fff; padding: 0 22px 0 4px; font: inherit; }
  .lens { position: absolute; right: 34px; top: 4px; }
  .chat { width: 30px; border: 1px solid #b0b0b0; border-left: 0; background: linear-gradient(#f6f6f6 45%, #dcdcdc 50%); display: grid; place-items: center; }
  .chat b { width: 16px; height: 12px; background: #6080b0; color: #fff; font-size: 10px; line-height: 12px; border-radius: 1px; }

  .mdi { flex: 1; display: grid; grid-template-columns: 958fr 957fr; gap: 1px; padding: 0 2px 1px; background: #808080; }
  .child { display: flex; flex-direction: column; min-width: 0; box-sizing: border-box; padding: 0 7px 7px 6px; border: 1px solid #444; border-radius: 6px 6px 0 0; background: linear-gradient(#c0cddc, #d7e4f2 30px); }
  .child.active { padding: 0 6px 7px 7px; border-color: #000; box-shadow: inset -1px -1px #30bfe0; background: linear-gradient(#9ab4d4, #b9d1ea 30px); }
  .childbar { display: flex; align-items: center; gap: 5px; box-sizing: border-box; height: 29px; font: 11px/18px 'Open Sans', sans-serif; color: #555; padding: 4px 3px 0; }
  .active .childbar { color: #111; }
  .controls { margin-left: auto; display: flex; gap: 3px; padding-top: 1px; }
  .controls button { display: grid; place-items: center; box-sizing: border-box; width: 30px; height: 17px; border: 1px solid #7888a8; border-radius: 2px; box-shadow: inset 0 0 0 1px #e0ebf6; }
  .active .controls button { background: linear-gradient(#c0d2e8, #9cb6d4 50%, #b4cae4); }
  .active .controls .close { border-color: #501828; background: linear-gradient(#e09888, #c85040 50%, #b83018 55%, #d06040); box-shadow: inset 0 0 0 1px #e8a898; }
  .client { flex: 1; display: flex; min-height: 0; border: 2px solid; border-color: #7c7c7c #f4f4f4 #f4f4f4 #7c7c7c; background: #000; }
  .chart { width: 100%; flex: 1; min-width: 0; }

  .r { fill: #ff0000; }
  .g { fill: #228b22; }
  .b { fill: #1e90ff; }
  .l { fill: #00ff00; }
  .axis, .ax { font: 9px 'DejaVu Sans Condensed', sans-serif; }
  .axis { fill: #fff; }
  .cap { font: 10px 'DejaVu Sans Condensed', sans-serif; fill: #fff; }
  .note { font-size: 9px; }
  .sym { font: 9px 'DejaVu Sans Condensed', sans-serif; fill: #0000ff; text-anchor: middle; }
  .tiny { font: 8px 'Liberation Sans', sans-serif; fill: #b0c4de; }
  .arial { font-family: 'Liberation Sans', Arial, sans-serif; }
  .verd { font-family: 'DejaVu Sans Condensed', sans-serif; }
  .mono { font: 13px 'Liberation Mono', monospace; fill: #1e90ff; }

  .doctabs { display: flex; height: 20px; border-top: 1px solid #000; margin-top: 1px; padding-left: 5px; font: 11px/16px 'Open Sans', sans-serif; color: #808080; }
  .doctabs > button { width: 80px; }
  .doctabs > button:not(.on) { border-right: 1px solid #777; height: 14px; margin-top: 2px; line-height: 12px; }
  .doctabs .on { height: 19px; background: #fff; color: #000; border: solid #000; border-width: 0 2px 2px 1px; }
  .scrollers { margin-left: auto; display: flex; gap: 10px; padding-right: 6px; }

  .terminal { display: flex; padding-top: 3px; }
  aside { width: 14px; display: flex; flex-direction: column; justify-content: space-between; }
  aside button { height: 12px; line-height: 10px; font-weight: bold; }
  aside span { flex: 1; writing-mode: vertical-rl; transform: rotate(180deg); text-align: left; line-height: 14px; font-size: 11px; color: #445; background: linear-gradient(#a8c0d8, #d4e2f0); padding-top: 4px; }
  .tbody { flex: 1; min-width: 0; border-left: 1px solid #a0a0a0; border-top: 1px solid #a0a0a0; }
  .tarea { display: flex; height: 107px; overflow: hidden; background: #fff; }
  table { flex: 1; border-collapse: collapse; table-layout: fixed; font: 11px/19px 'Noto Sans', sans-serif; }
  th { height: 23px; padding: 0 7px; text-align: left; font-weight: normal; background: linear-gradient(#fff, #f3f5f8); border-right: 1px solid #dcdcdc; border-bottom: 2px solid #c8c8c8; box-sizing: border-box; }
  .c1 { width: 159px; }
  td { height: 19px; padding: 0 5px; border-bottom: 1px solid #c4c4c4; border-right: 1px solid #d0d0d0; white-space: nowrap; }
  td svg { display: inline-block; margin-right: 10px; }
  tr:nth-child(odd) td { background: #ececec; }
  .vscroll { width: 20px; display: flex; flex-direction: column; align-items: center; background: #f0f0f0; padding: 8px 4px 6px 0; box-sizing: border-box; }
  .vscroll i { border: 3px solid transparent; }
  .vscroll .up { border-bottom: 4px solid #444; border-top: 0; margin-bottom: 6px; }
  .vscroll .down { border-top: 4px solid #444; border-bottom: 0; margin-top: auto; }
  .vscroll b { width: 12px; height: 13px; border: 1px solid #999; border-radius: 2px; background: linear-gradient(90deg, #fff, #ddd); }
  .ttabs { display: flex; height: 20px; border-top: 1px solid #000; padding-left: 4px; font: 11px/16px 'Open Sans', sans-serif; color: #777; }
  .ttabs button { padding: 0 8px; border-right: 1px solid #888; height: 12px; line-height: 12px; margin-top: 3px; white-space: nowrap; }
  .ttabs button:nth-last-child(2) { border-right: 0; }
  .ttabs .on { height: 19px; line-height: 15px; margin: -1px 0 0 1px; padding: 0 10px; background: #fff; color: #000; border: solid #000; border-width: 0 2px 2px 1px; }
  sub { color: #f02020; font: bold 8px/8px 'DejaVu Sans Condensed', sans-serif; margin-left: 3px; vertical-align: -1px; }

  .status { display: flex; align-items: center; box-sizing: border-box; height: 21px; margin-top: 1px; padding-top: 4px; border-top: 1px solid #a0a0a0; font: 11px/16px 'Open Sans', sans-serif; }
  .help { flex: 1; padding-left: 2px; }
  .cell { box-sizing: border-box; width: 71px; height: 15px; line-height: 14px; border-left: 1px solid #b0b0b0; padding-left: 6px; }
  .cell.profile { width: 117px; }
  .cell.a { width: 101px; }
  .cell.net { width: 46px; padding-left: 0; border: 0; }
  .cell.traffic { width: 108px; padding-left: 10px; border: 0; }
  .taskbar { height: 2px; background: linear-gradient(90deg, #5a7a94, #9cc0d8 40%, #b8d4e8); }
</style>
